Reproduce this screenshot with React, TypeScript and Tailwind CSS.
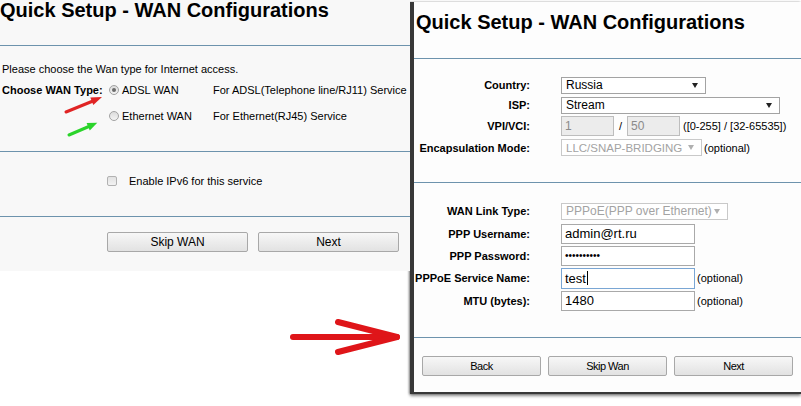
import * as React from "react";

const Line = ({ className = "" }: { className?: string }) => (
  <div className={`h-px bg-[#6d93ad] ${className}`} />
);

const Arrow = ({ color }: { color: string }) => (
  <svg width="6" height="5" viewBox="0 0 6 5" className="shrink-0">
    <path d="M0 0H6L3 5Z" fill={color} />
  </svg>
);

interface SelectProps {
  value: string;
  className: string;
  disabled?: boolean;
}

// text size comes in through className
const Select = ({ value, className, disabled }: SelectProps) => (
  <div
    className={`flex h-[17px] shrink-0 items-center justify-between whitespace-nowrap border bg-white pl-[4px] pr-[7px] leading-[14px] ${
      disabled ? "border-[#c9c9c9] text-[#a3a3a3]" : "border-[#a3a3a3] text-black"
    } ${className}`}
  >
    <span>{value}</span>
    <Arrow color={disabled ? "#b0b0b0" : "#222"} />
  </div>
);

const TextBox = ({
  children,
  className,
}: {
  children?: React.ReactNode;
  className: string;
}) => (
  <div
    className={`flex shrink-0 items-center whitespace-nowrap border pl-[3px] ${className}`}
  >
    {children}
  </div>
);

const Row = ({
  label,
  h,
  children,
}: {
  label: string;
  h: string;
  children: React.ReactNode;
}) => (
  <div className={`flex items-center ${h}`}>
    <span className="w-[116px] shrink-0 whitespace-nowrap text-right text-[11px] font-bold leading-[14px]">
      {label}
    </span>
    <div className="ml-[31px] flex items-center whitespace-nowrap">{children}</div>
  </div>
);

const Btn = ({ label, className }: { label: string; className: string }) => (
  <div
    className={`flex h-[20px] items-center justify-center rounded-[2px] border border-[#a8a8a8] bg-gradient-to-b from-[#f7f7f7] to-[#e2e2e2] ${className}`}
  >
    {label}
  </div>
);

const Radio = ({ checked }: { checked?: boolean }) => (
  <div className="flex h-[10px] w-[10px] items-center justify-center rounded-full border border-[#a2a2a2] bg-gradient-to-b from-[#dcdcdc] to-[#f4f4f4]">
    {checked && <div className="h-[4px] w-[4px] rounded-full bg-[#6b6b6b]" />}
  </div>
);

const input = "h-[20px] w-[134px] border-[#a9a9a9] bg-white text-[13px] leading-[15px]";
const vpi = "h-[20px] w-[53px] border-[#bdbdbd] bg-[#ececec] text-[12px] leading-[14px] text-[#8a8a8a]";

export default function App() {
  return (
    <div className="flex h-[406px] w-[801px] overflow-hidden bg-white font-['Liberation_Sans',Arial,sans-serif] text-black">
      {/* left screenshot */}
      <div className="relative w-[410px] shrink-0">
        <div className="h-[271px] bg-[#f8f8f8]">
          <h1 className="whitespace-nowrap text-[20px] font-bold leading-[20px]">
            Quick Setup - WAN Configurations
          </h1>
          <Line className="mt-[25px]" />
          <p className="mt-[16px] pl-[2px] text-[11px] leading-[14px]">
            Please choose the Wan type for Internet access.
          </p>
          <div className="mt-[4px] flex h-[20px] items-center text-[11px] leading-[14px]">
            <span className="w-[107px] pl-[2px] font-bold">Choose WAN Type:</span>
            <div className="ml-[2px]">
              <Radio checked />
            </div>
            <span className="ml-[3px] w-[91px]">ADSL WAN</span>
            <span>For ADSL(Telephone line/RJ11) Service</span>
          </div>
          <div className="mt-[6px] flex h-[20px] items-center text-[11px] leading-[14px]">
            <span className="w-[107px]" />
            <div className="ml-[2px]">
              <Radio />
            </div>
            <span className="ml-[3px] w-[91px]">Ethernet WAN</span>
            <span>For Ethernet(RJ45) Service</span>
          </div>
          <Line className="mt-[25px]" />
          <div className="mt-[18px] flex h-[21px] items-center text-[11px] leading-[14px]">
            <div className="ml-[107px] h-[10px] w-[10px] rounded-[2px] border border-[#b2b2b2] bg-gradient-to-b from-[#e2e2e2] to-[#f3f3f3]" />
            <span className="ml-[12px]">Enable IPv6 for this service</span>
          </div>
          <Line className="mt-[25px]" />
          <div className="mt-[15px] flex gap-[10px] pl-[107px] text-[12px] leading-[14px]">
            <Btn label="Skip WAN" className="w-[141px]" />
            <Btn label="Next" className="w-[141px]" />
          </div>
        </div>
        <svg className="ml-[288px] mt-[45px]" width="118" height="42" viewBox="0 0 118 42">
          <g stroke="#df1519" strokeWidth="6" strokeLinecap="round" fill="none">
            <line x1="5" y1="21" x2="108" y2="21" />
            <line x1="50" y1="6" x2="109" y2="21" />
            <line x1="50" y1="36" x2="109" y2="21" />
          </g>
        </svg>
        <svg className="absolute left-0 top-0" width="410" height="271">
          <line x1="66" y1="112" x2="93" y2="101" stroke="#e02424" strokeWidth="3" strokeLinecap="round" />
          <polygon points="102,97 93.3,104.9 90.3,97.5" fill="#e02424" />
          <line x1="69" y1="135" x2="90" y2="126" stroke="#2bd42b" strokeWidth="3" strokeLinecap="round" />
          <polygon points="97.3,122.7 89.8,130.5 86.6,123.1" fill="#2bd42b" />
        </svg>
      </div>

      {/* right screenshot */}
      <div className="mt-[2px] h-[392px] w-[391px] shrink-0 border-b-[2px] border-l-[4px] border-[#383838] bg-[#fdfdfd] shadow-[-1px_0_2px_rgba(0,0,0,0.35),0_2px_3px_rgba(0,0,0,0.45)]">
        <h1 className="whitespace-nowrap pl-[2px] pt-[10px] text-[20px] font-bold leading-[20px]">
          Quick Setup - WAN Configurations
        </h1>
        <Line className="mt-[26px]" />
        <div className="mt-[16px]">
          <Row label="Country:" h="h-[20px]">
            <Select value="Russia" className="w-[145px] text-[12px]" />
          </Row>
          <Row label="ISP:" h="h-[20px]">
            <Select value="Stream" className="w-[219px] text-[12px]" />
          </Row>
          <Row label="VPI/VCI:" h="h-[22px]">
            <TextBox className={vpi}>1</TextBox>
            <span className="w-[13px] pl-[5px] text-[11px] leading-[14px]">/</span>
            <TextBox className={vpi}>50</TextBox>
            <span className="ml-[3px] text-[11px] leading-[14px]">
              ([0-255] / [32-65535])
            </span>
          </Row>
          <Row label="Encapsulation Mode:" h="h-[21px]">
            <Select value="LLC/SNAP-BRIDGING" className="w-[141px] text-[11.5px]" disabled />
            <span className="ml-[2px] text-[11px] leading-[14px]">(optional)</span>
          </Row>
        </div>
        <Line className="mt-[24px]" />
        <div className="mt-[17px]">
          <Row label="WAN Link Type:" h="h-[22px]">
            <Select value="PPPoE(PPP over Ethernet)" className="w-[167px] text-[12px]" disabled />
          </Row>
          <Row label="PPP Username:" h="h-[23px]">
            <TextBox className={input}>admin@rt.ru</TextBox>
          </Row>
          <Row label="PPP Password:" h="h-[22px]">
            <TextBox className="h-[20px] w-[134px] border-[#a9a9a9] bg-white text-[10px] leading-[12px]">
              ••••••••••
            </TextBox>
          </Row>
          <Row label="PPPoE Service Name:" h="h-[22px]">
            <TextBox className="h-[21px] w-[134px] border-[#7aa6d4] bg-white text-[13px] leading-[15px]">
              test<span className="ml-px inline-block h-[14px] w-px bg-black" />
            </TextBox>
            <span className="ml-[2px] text-[11px] leading-[14px]">(optional)</span>
          </Row>
          <Row label="MTU (bytes):" h="h-[23px]">
            <TextBox className={input}>1480</TextBox>
            <span className="ml-[2px] text-[11px] leading-[14px]">(optional)</span>
          </Row>
        </div>
        <Line className="mt-[25px]" />
        <div className="mt-[18px] flex gap-[7px] pl-[8px] text-[11px] leading-[14px] tracking-[-0.5px]">
          <Btn label="Back" className="w-[119px]" />
          <Btn label="Skip Wan" className="w-[119px]" />
          <Btn label="Next" className="w-[119px]" />
        </div>
      </div>
    </div>
  );
}
